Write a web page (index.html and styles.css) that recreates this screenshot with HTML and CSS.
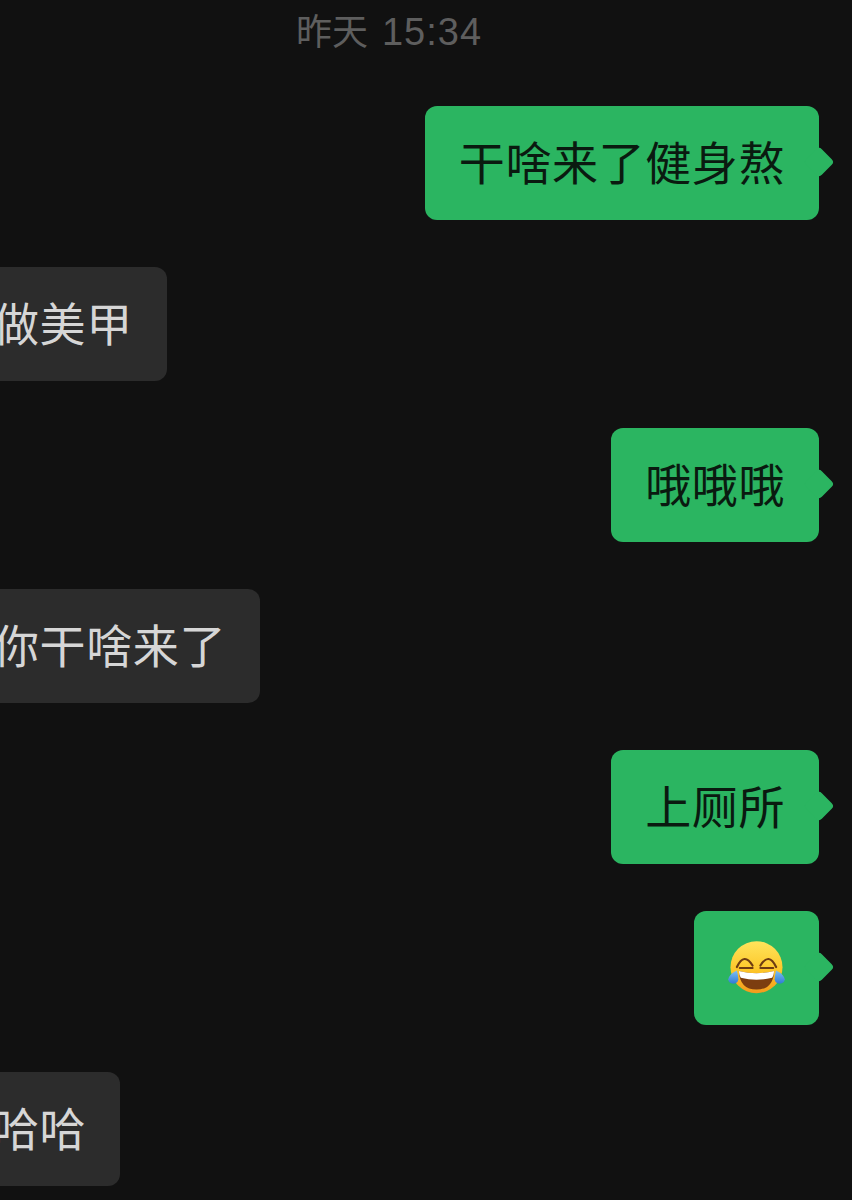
FILE: index.html
```html
<!DOCTYPE html>
<html lang="zh-CN">
<head>
  <meta charset="UTF-8" />
  <meta name="viewport" content="width=device-width, initial-scale=1.0"/>
  <title>聊天记录</title>
  <link rel="stylesheet" href="styles.css">
</head>
<body>

  <div class="chat">
    <div class="time">昨天<span class="time-clock">15:34</span></div>

    <div class="msg msg-me">干啥来了健身熬</div>
    <div class="msg msg-other">做美甲</div>
    <div class="msg msg-me">哦哦哦</div>
    <div class="msg msg-other">你干啥来了</div>
    <div class="msg msg-me">上厕所</div>
    <div class="msg msg-me">
      <svg class="emoji" viewBox="0 0 58 54" width="57" height="53" role="img" aria-label="😂">
        <defs>
          <linearGradient id="face" x1="0" y1="0" x2="0" y2="1">
            <stop offset="0" stop-color="#ffe45c"/>
            <stop offset="0.55" stop-color="#fdc72a"/>
            <stop offset="1" stop-color="#f49a1c"/>
          </linearGradient>
          <linearGradient id="tear" x1="0" y1="0" x2="0" y2="1">
            <stop offset="0" stop-color="#7fc0f2"/>
            <stop offset="1" stop-color="#2f7bd6"/>
          </linearGradient>
        </defs>
        <circle cx="29" cy="26.700" r="26.500" fill="url(#face)"/>
        <path d="M9 26.500 Q16.500 11 25 25" fill="none" stroke="#6e3c12" stroke-width="2.200" stroke-linecap="round"/>
        <path d="M12 27.500 L25 27.500" fill="none" stroke="#6e3c12" stroke-width="2.200" stroke-linecap="round"/>
        <path d="M49 26.500 Q41.500 11 33 25" fill="none" stroke="#6e3c12" stroke-width="2.200" stroke-linecap="round"/>
        <path d="M46 27.500 L33 27.500" fill="none" stroke="#6e3c12" stroke-width="2.200" stroke-linecap="round"/>
        <path d="M11 30.500 Q29 35 47 30.500 Q46 49.500 29 49.500 Q12 49.500 11 30.500 Z" fill="#7c3d10"/>
        <path d="M11 30.500 Q29 35 47 30.500 Q46.600 35 45 37.500 Q29 41.500 13 37.500 Q11.400 35 11 30.500 Z" fill="#fff"/>
        <path d="M9 30 Q10.500 35 10.500 39 A5.200 5.200 0 0 1 0.200 39 Q1 34 9 30 Z" fill="url(#tear)"/>
        <path d="M49 30 Q47.500 35 47.500 39 A5.200 5.200 0 0 0 57.800 39 Q57 34 49 30 Z" fill="url(#tear)"/>
      </svg>
    </div>
    <div class="msg msg-other">哈哈</div>
  </div>

</body>
</html>
```

FILE: styles.css
```css
html, body {
  margin: 0;
  height: 1200px;
  overflow: hidden;
  background-color: #111111;
}

.chat {
  display: flex;
  flex-direction: column;
  gap: 48px;
  padding: 0 33px 0 0;
  font-family: "Liberation Sans", "Noto Sans CJK SC", sans-serif;
}

.time {
  height: 58px;
  padding: 6px 41px 0 0;
  box-sizing: border-box;
  text-align: center;
  font-size: 36px;
  line-height: 52px;
  color: #5e5e5e;
}

.time-clock {
  margin-left: 14px;
  font-size: 38px;
  letter-spacing: 1px;
}

.msg {
  position: relative;
  display: flex;
  align-items: center;
  height: 113.500px;
  margin-bottom: -0.500px;
  padding: 0 34px 6px;
  box-sizing: border-box;
  border-radius: 12px;
  font-family: "Noto Sans CJK SC", sans-serif;
  font-size: 46px;
  letter-spacing: 0.6px;
}

.msg-me {
  align-self: flex-end;
  background-color: #2bb561;
  color: #0a1a10;
}

.msg-me::after {
  content: "";
  position: absolute;
  top: 45px;
  right: -11px;
  width: 22px;
  height: 22px;
  border-radius: 4px;
  background-color: #2bb561;
  transform: rotate(45deg);
}

.msg-other {
  align-self: flex-start;
  margin-left: -41px;
  background-color: #2c2c2c;
  color: #d6d6d6;
}

.emoji {
  display: block;
  margin-top: 6px;
}
```
